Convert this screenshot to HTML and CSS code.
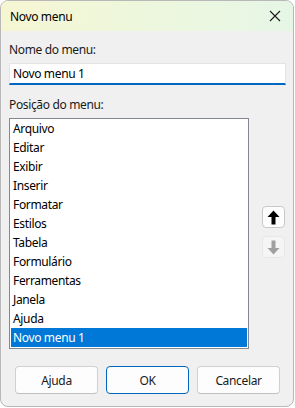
FILE: index.html
```html
<!DOCTYPE html>
<html lang="pt">
<head>
<meta charset="utf-8">
<link rel="stylesheet" href="styles.css">
</head>
<body>
<div class="dialog">
  <div class="titlebar">
    <span class="title">Novo menu</span>
    <svg class="close" width="12" height="12" viewBox="0 0 12 12"><path d="M1 1L11 11M11 1L1 11" stroke="#1a1a1a" stroke-width="1.1"/></svg>
  </div>
  <div class="content">
    <div class="label">Nome do menu:</div>
    <div class="input">Novo menu 1</div>
    <div class="label label2">Posição do menu:</div>
    <div class="listrow">
      <ul class="list">
        <li>Arquivo</li>
        <li>Editar</li>
        <li>Exibir</li>
        <li>Inserir</li>
        <li>Formatar</li>
        <li>Estilos</li>
        <li>Tabela</li>
        <li>Formulário</li>
        <li>Ferramentas</li>
        <li>Janela</li>
        <li>Ajuda</li>
        <li class="sel">Novo menu 1</li>
      </ul>
      <div class="arrows">
        <div class="abtn">
          <svg width="13" height="15" viewBox="0 0 13 15"><path d="M6.5 0.5L12.5 7H8.5V14.5H4.5V7H0.5Z" fill="#000"/></svg>
        </div>
        <div class="abtn dis">
          <svg width="13" height="15" viewBox="0 0 13 15"><path d="M6.5 14.5L12.5 8H8.5V0.5H4.5V8H0.5Z" fill="#a0a0a0"/></svg>
        </div>
      </div>
    </div>
    <div class="buttons">
      <div class="btn">Ajuda</div>
      <div class="btn def">OK</div>
      <div class="btn">Cancelar</div>
    </div>
  </div>
</div>
</body>
</html>
```
FILE: styles.css
```css
* { box-sizing: border-box; }
html, body { margin: 0; padding: 0; }
body {
  width: 295px; height: 408px; overflow: hidden;
  background: #ffffff;
  font-family: "Noto Sans", "Open Sans", sans-serif;
  font-size: 12px;
  letter-spacing: -0.35px;
  color: #1a1a1a;
}
.dialog {
  width: 294px; height: 407px;
  border: 1px solid #b8b8b8;
  border-radius: 8px;
  background: #f0f0f0;
  overflow: hidden;
  display: flex; flex-direction: column;
}
.titlebar {
  height: 30px;
  background: linear-gradient(90deg, #f6f6d2 0%, #eef7dc 45%, #e6f6e6 100%);
  display: flex; align-items: center; justify-content: space-between;
  padding: 0 10px 0 9px;
}
.title { font-size: 12px; color: #000; }
.close { display: block; margin-right: 2px; }
.content { padding: 10px 8px 0 8px; display: flex; flex-direction: column; flex: 1; }
.label { height: 16px; line-height: 16px; margin-top: 1px; }
.label2 { margin-top: 12px; }
.input {
  margin-top: 5px;
  height: 22px;
  width: 277px;
  background: #fff;
  border: 1px solid #e4e4e4;
  border-bottom: 2px solid #0067c0;
  padding: 0 3px;
  line-height: 19px;
  color: #000;
}
.listrow { display: flex; margin-top: 5px; }
.list {
  list-style: none; margin: 0; padding: 0 1px;
  width: 240px; height: 231px;
  border: 1px solid #828790;
  background: #fff;
}
.list li {
  height: 19px; line-height: 19px; padding-left: 2px; color: #000;
}
.list li.sel { background: #0078d7; color: #fff; }
.arrows {
  display: flex; flex-direction: column; gap: 8px;
  margin-left: 13px; margin-top: 88px;
}
.abtn {
  width: 23px; height: 22px;
  border: 1px solid #c8c8c8; border-radius: 4px;
  background: #fdfdfd;
  display: flex; align-items: center; justify-content: center;
}
.abtn svg { display: block; }
.abtn.dis { border-color: #e8e8e8; background: #f5f5f5; }
.buttons {
  display: flex; gap: 8px; margin-top: 17px; padding-left: 6px;
}
.btn {
  width: 83px; height: 28px;
  border: 1px solid #d0d0d0; border-bottom-color: #c0c0c0;
  border-radius: 4px;
  background: #fdfdfd;
  display: flex; align-items: center; justify-content: center;
  color: #1a1a1a;
}
.btn.def { border: 1px solid #0067c0; }
```
